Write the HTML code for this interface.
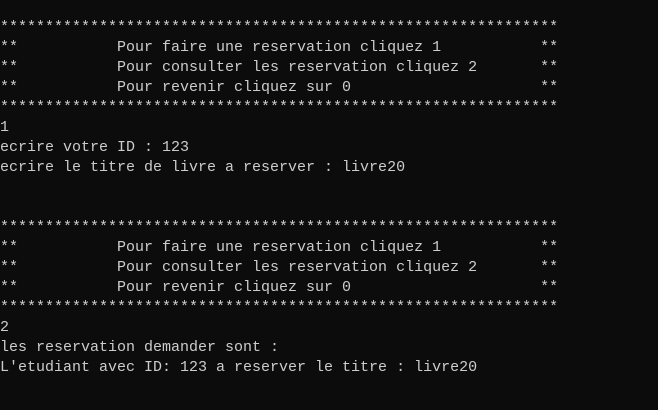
<!DOCTYPE html>
<html><head><meta charset="utf-8"><style>
html,body{margin:0;padding:0;background:#0c0c0c;width:658px;height:410px;overflow:hidden}
pre{margin:0;position:absolute;left:0;top:18px;font-family:"Liberation Mono",monospace;font-size:15px;line-height:20px;color:#cccccc;letter-spacing:0px}
</style></head><body><pre>**************************************************************
**           Pour faire une reservation cliquez 1           **
**           Pour consulter les reservation cliquez 2       **
**           Pour revenir cliquez sur 0                     **
**************************************************************
1
ecrire votre ID : 123
ecrire le titre de livre a reserver : livre20


**************************************************************
**           Pour faire une reservation cliquez 1           **
**           Pour consulter les reservation cliquez 2       **
**           Pour revenir cliquez sur 0                     **
**************************************************************
2
les reservation demander sont :
L'etudiant avec ID: 123 a reserver le titre : livre20
</pre></body></html>
